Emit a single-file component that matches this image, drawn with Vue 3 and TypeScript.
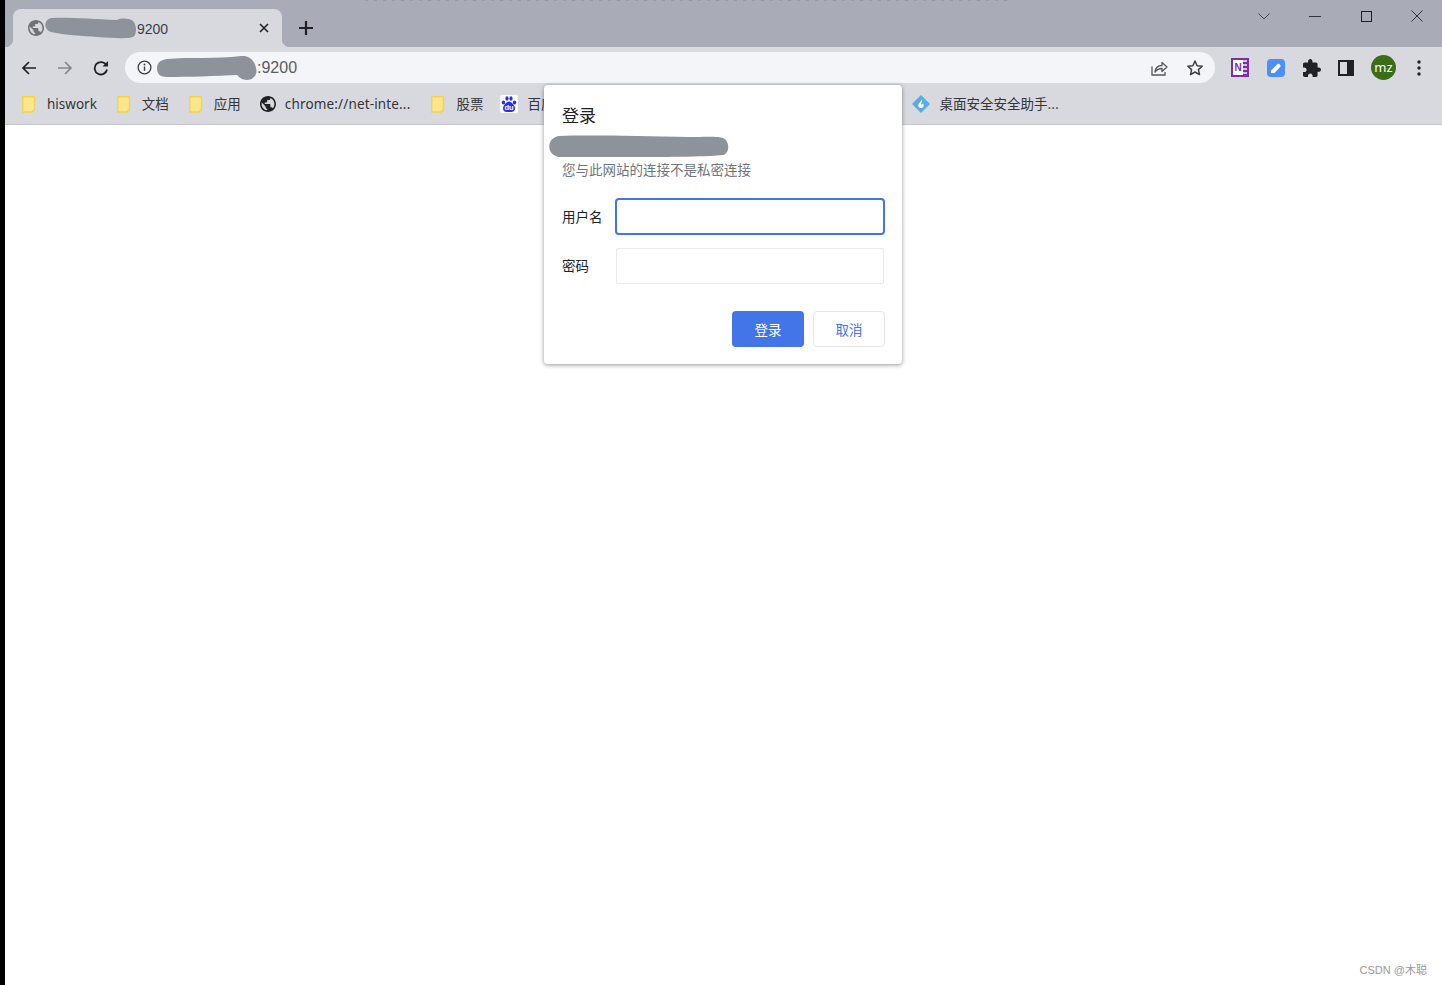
<template>
  <div class="page">
    <div class="edge"></div>
    <div class="browser">
      <div class="tabstrip">
        <div class="tab">
          <svg class="tab-globe" viewBox="2 2 20 20" width="16" height="16">
            <path fill="#6f7278" :d="globePath" />
          </svg>
          <svg class="tab-mask" viewBox="0 0 94 24" width="94" height="24">
            <path fill="#8e939b" d="M8 2C24 1 50 3 74 4c4-2 12-2 16 1 4 4 4 14 0 16-6 2-20 1-36 0-14-1-32-2-46-5C1 14 0 4 8 2z" />
          </svg>
          <span class="tab-title">9200</span>
          <svg class="tab-close" viewBox="0 0 10 10" width="10" height="10">
            <path d="M1 1l8 8M9 1L1 9" stroke="#202124" stroke-width="1.6" fill="none" />
          </svg>
        </div>
        <svg class="newtab" viewBox="0 0 14 14" width="14" height="14">
          <path d="M7 0v14M0 7h14" stroke="#202124" stroke-width="2.2" fill="none" />
        </svg>
        <div class="winctrl">
          <svg viewBox="0 0 14 14" width="14" height="14"><path d="M1.5 4.5L7 10l5.500-5.500" stroke="#4a4c52" fill="none" /></svg>
          <svg viewBox="0 0 14 14" width="14" height="14"><path d="M1 7.500h12" stroke="#33353a" fill="none" /></svg>
          <svg viewBox="0 0 14 14" width="14" height="14"><rect x="2.500" y="2.500" width="10" height="10" stroke="#1f2024" fill="none" /></svg>
          <svg viewBox="0 0 14 14" width="14" height="14"><path d="M1.500 1.500l11 11M12.500 1.500l-11 11" stroke="#33353a" fill="none" /></svg>
        </div>
      </div>

      <div class="toolbar">
        <button class="nav">
          <svg viewBox="0 0 16 16" width="16" height="16"><path d="M15 8H2M8 2L2 8l6 6" stroke="#202124" stroke-width="1.700" fill="none" /></svg>
        </button>
        <button class="nav">
          <svg viewBox="0 0 16 16" width="16" height="16"><path d="M1 8h13M8 2l6 6-6 6" stroke="#85878d" stroke-width="1.700" fill="none" /></svg>
        </button>
        <button class="nav nav-reload">
          <svg viewBox="0 0 16 16" width="16" height="16">
            <path d="M13.300 5.200A6.200 6.200 0 1 0 14 9.500" stroke="#202124" stroke-width="1.800" fill="none" />
            <path d="M15 1v5.500H9.500z" fill="#202124" />
          </svg>
        </button>
        <div class="omnibox">
          <svg class="omni-info" viewBox="0 0 16 16" width="15" height="15">
            <circle cx="8" cy="8" r="6.800" stroke="#3c3e44" stroke-width="1.400" fill="none" />
            <path d="M8 7v4.500" stroke="#3c3e44" stroke-width="1.500" />
            <circle cx="8" cy="4.800" r="1" fill="#3c3e44" />
          </svg>
          <svg class="omni-mask" viewBox="0 0 102 24" width="102" height="24">
            <path fill="#8e939b" d="M10 3C30 1 60 3 84 0c8-1 14 5 15 12 2 6-2 12-9 12-5 0-8-3-10-5-20 1-50 2-70 2C2 21 0 17 0 12S3 4 10 3z" />
          </svg>
          <span class="omni-url">:9200</span>
          <svg class="omni-share" viewBox="0 0 18 18" width="18" height="18">
            <path d="M2 7.500V16h13v-3" stroke="#55575c" stroke-width="1.300" fill="none" />
            <path d="M5 13c.5-4 3-6.500 7-6.500V3.500l5 4.500-5 4.500V9.500c-3 0-5 1-7 3.500z" stroke="#55575c" stroke-width="1.300" fill="none" stroke-linejoin="round" />
          </svg>
          <svg class="omni-star" viewBox="0 0 18 18" width="18" height="18">
            <path d="M9 2l2.100 4.700 5.100.5-3.800 3.400 1.100 5L9 13l-4.500 2.600 1.100-5L1.800 7.200l5.100-.5z" stroke="#3c3e44" stroke-width="1.500" fill="none" stroke-linejoin="round" />
          </svg>
        </div>
        <div class="extensions">
          <div class="ext-note"><span class="ext-note-n">N</span><span class="ext-note-lines"></span></div>
          <div class="ext-blue">
            <svg viewBox="0 0 18 18" width="18" height="18"><path d="M4 11.500L10.500 5c1.200-1.200 4 1.300 2.800 2.800L7.500 14H4z" fill="#fff" /></svg>
          </div>
          <svg class="ext-puzzle" viewBox="2 1 21 21" width="18" height="18"><path fill="#202124" d="M20.500 11H19V7c0-1.100-.9-2-2-2h-4V3.500C13 2.120 11.880 1 10.500 1S8 2.120 8 3.500V5H4c-1.100 0-1.990.9-1.990 2v3.800H3.500c1.490 0 2.700 1.210 2.700 2.700s-1.210 2.700-2.700 2.700H2V20c0 1.100.9 2 2 2h3.800v-1.500c0-1.490 1.210-2.700 2.700-2.700 1.490 0 2.700 1.210 2.700 2.700V22H17c1.100 0 2-.9 2-2v-4h1.500c1.380 0 2.500-1.120 2.500-2.500S21.880 11 20.500 11z" /></svg>
          <div class="ext-panel"></div>
          <div class="avatar">mz</div>
          <svg class="ext-dots" viewBox="0 0 4 16" width="4" height="16">
            <circle cx="2" cy="2" r="1.700" fill="#202124" />
            <circle cx="2" cy="8" r="1.700" fill="#202124" />
            <circle cx="2" cy="14" r="1.700" fill="#202124" />
          </svg>
        </div>
      </div>

      <div class="bookmarks">
        <div v-for="b in bookmarks" :key="b.label" class="bookmark" :style="{ marginRight: b.gap + 'px' }">
          <svg v-if="b.icon === 'folder'" class="bm-icon bm-folder" viewBox="0 0 14 17" width="14" height="17">
            <path d="M.8.8h11.700v12.500L10 16H.8z" fill="#fce68b" stroke="#f2d24e" stroke-width="1.400" />
          </svg>
          <svg v-else-if="b.icon === 'globe'" class="bm-icon" viewBox="2 2 20 20" width="16" height="16">
            <path fill="#202124" :d="globePath" />
          </svg>
          <svg v-else-if="b.icon === 'baidu'" class="bm-icon" viewBox="0 0 18 18" width="18" height="18">
            <rect width="18" height="18" rx="2" fill="#fff" />
            <ellipse cx="3.500" cy="7.500" rx="1.700" ry="2" fill="#2932e1" />
            <ellipse cx="14.500" cy="7.500" rx="1.700" ry="2" fill="#2932e1" />
            <ellipse cx="7" cy="3.500" rx="1.600" ry="2.200" fill="#2932e1" />
            <ellipse cx="11" cy="3.500" rx="1.600" ry="2.200" fill="#2932e1" />
            <path d="M9 6.500c2.500 0 6 4 6 7S12.500 17 9 17s-6-.5-6-3.500 3.500-7 6-7z" fill="#2932e1" />
            <text x="9" y="15" text-anchor="middle" font-size="7.500" font-weight="700" fill="#fff" font-family="Liberation Sans, sans-serif">du</text>
          </svg>
          <svg v-else class="bm-icon" viewBox="0 0 18 18" width="18" height="18">
            <path d="M9 0l9 9-9 9-9-9z" fill="#5aabe0" />
            <path d="M10.500 4L7 8.500c-1.500 2-.5 4.500 2 4.500s3.500-2.500 2-4.500c-.5 1-1.500 1-2 1z" fill="#fff" />
          </svg>
          <span class="bm-label" :class="{ 'bm-cjk': b.cjk, 'bm-wide': b.icon === 'globe' }">{{ b.label }}</span>
        </div>
      </div>

      <div class="content">
        <span class="watermark">CSDN @木聪</span>
      </div>
    </div>

    <div class="dialog">
      <div class="dlg-title">登录</div>
      <svg class="dlg-mask" viewBox="0 0 180 22" width="180" height="22">
        <path fill="#8e939b" d="M10 1C40 0 90 1 140 2c12 0 30-1 34 1 7 3 7 15 0 17-20 2-60 2-100 2H10C-3 20-3 3 10 1z" />
      </svg>
      <div class="dlg-sub">您与此网站的连接不是私密连接</div>
      <div class="dlg-row">
        <label class="dlg-label">用户名</label>
        <input class="dlg-input dlg-focus" type="text" />
      </div>
      <div class="dlg-row dlg-row2">
        <label class="dlg-label">密码</label>
        <input class="dlg-input dlg-plain" type="password" />
      </div>
      <div class="dlg-actions">
        <button class="btn btn-primary">登录</button>
        <button class="btn btn-cancel">取消</button>
      </div>
    </div>
  </div>
</template>

<script setup lang="ts">
interface Bookmark {
  label: string;
  icon: 'folder' | 'globe' | 'baidu' | 'diamond';
  gap: number;
  cjk?: boolean;
}

const globePath =
  'M12 2C6.48 2 2 6.48 2 12s4.48 10 10 10 10-4.48 10-10S17.52 2 12 2zm-1 17.93c-3.95-.49-7-3.85-7-7.93 0-.62.08-1.21.21-1.79L9 15v1c0 1.1.9 2 2 2v1.93zm6.9-2.54c-.26-.81-1-1.39-1.9-1.39h-1v-3c0-.55-.45-1-1-1H8v-2h2c.55 0 1-.45 1-1V7h2c1.1 0 2-.9 2-2v-.41c2.93 1.19 5 4.06 5 7.41 0 2.08-.8 3.97-2.1 5.39z';

const bookmarks: Bookmark[] = [
  { label: 'hiswork', icon: 'folder', gap: 20 },
  { label: '文档', icon: 'folder', gap: 20, cjk: true },
  { label: '应用', icon: 'folder', gap: 19, cjk: true },
  { label: 'chrome://net-inte...', icon: 'globe', gap: 21 },
  { label: '股票', icon: 'folder', gap: 17, cjk: true },
  { label: '百度一下', icon: 'baidu', gap: 331, cjk: true },
  { label: '桌面安全安全助手...', icon: 'diamond', gap: 0, cjk: true }
];
</script>

<style>
html,
body {
  margin: 0;
  background: #fff;
}
</style>

<style scoped>
.page {
  position: relative;
  display: flex;
  width: 1442px;
  height: 985px;
  overflow: hidden;
  font-family: "Noto Sans", "Liberation Sans", "Noto Sans CJK SC", sans-serif;
}

.edge {
  width: 5px;
  flex: none;
  background: #000;
}

.browser {
  flex: 1;
  display: flex;
  flex-direction: column;
  min-width: 0;
}

.tabstrip {
  height: 47px;
  flex: none;
  display: flex;
  align-items: flex-start;
  padding-left: 8px;
  background: repeating-linear-gradient(90deg, #989aa4 0 3px, transparent 3px 9px) 360px 0 / 645px 1px no-repeat, #a9abb7;
}

.tab {
  position: relative;
  width: 269px;
  height: 38px;
  margin-top: 9px;
  display: flex;
  align-items: center;
  box-sizing: border-box;
  padding: 0 13px 0 15px;
  background: #d8d9df;
  border-radius: 8px 8px 0 0;
}

.tab::before,
.tab::after {
  content: "";
  position: absolute;
  bottom: 0;
  width: 8px;
  height: 8px;
}

.tab::before {
  left: -8px;
  background: radial-gradient(circle at 0 0, transparent 8px, #d8d9df 8.500px);
}

.tab::after {
  right: -8px;
  background: radial-gradient(circle at 100% 0, transparent 8px, #d8d9df 8.500px);
}

.tab-globe {
  flex: none;
}

.tab-mask {
  flex: none;
  margin-left: -1px;
}

.tab-title {
  padding-top: 1px;
  font-family: "Liberation Sans", sans-serif;
  font-size: 14px;
  color: #3c3e44;
}

.tab-close {
  flex: none;
  margin-left: auto;
}

.newtab {
  margin: 21px 0 0 17px;
  flex: none;
}

.winctrl {
  margin-left: auto;
  margin-top: 9px;
  padding-right: 18px;
  display: flex;
  gap: 37px;
}

.toolbar {
  height: 38px;
  flex: none;
  display: flex;
  align-items: flex-start;
  box-sizing: border-box;
  padding: 5px 0 0 6px;
  background: #d8d9df;
}

.nav {
  width: 36px;
  height: 31px;
  flex: none;
  padding: 0;
  border: 0;
  background: none;
  display: flex;
  align-items: center;
  justify-content: center;
}

.nav-reload {
  margin-right: 6px;
}

.omnibox {
  width: 1090px;
  height: 31px;
  flex: none;
  display: flex;
  align-items: center;
  box-sizing: border-box;
  padding: 0 11px 0 12px;
  background: #f4f5f8;
  border-radius: 16px;
}

.omni-info {
  flex: none;
}

.omni-mask {
  flex: none;
  margin: 0 0 0 5px;
}

.omni-url {
  margin-left: -2px;
  padding-top: 1px;
  font-family: "Liberation Sans", sans-serif;
  font-size: 16px;
  color: #5a5c62;
}

.omni-share {
  margin-left: auto;
}

.omni-star {
  margin-left: 18px;
}

.extensions {
  flex: none;
  display: flex;
  align-items: center;
  height: 31px;
  margin-left: 16px;
}

.ext-note {
  width: 18px;
  height: 19px;
  display: flex;
  align-items: center;
  box-sizing: border-box;
  padding: 2px;
  background: #7a2fa3;
}

.ext-note-n {
  width: 10px;
  height: 15px;
  background: #fff;
  color: #7a2fa3;
  font-family: "Liberation Sans", sans-serif;
  font-size: 10px;
  font-weight: 700;
  line-height: 15px;
  text-align: center;
}

.ext-note-lines {
  flex: 1;
  height: 15px;
  background: repeating-linear-gradient(#d9b9ea 0 2px, #7a2fa3 2px 4px);
}

.ext-blue {
  width: 18px;
  height: 18px;
  margin-left: 18px;
  background: #4e8ef7;
  border-radius: 4px;
}

.ext-puzzle {
  margin-left: 18px;
}

.ext-panel {
  width: 16px;
  height: 16px;
  margin-left: 17px;
  box-sizing: border-box;
  border: 2px solid #202124;
  border-right-width: 7px;
  background: #d8d9df;
}

.avatar {
  width: 25px;
  height: 25px;
  margin-left: 17px;
  border-radius: 50%;
  background: #3b6d17;
  color: #fff;
  font-size: 13px;
  line-height: 24px;
  text-align: center;
}

.ext-dots {
  margin-left: 21px;
}

.bookmarks {
  height: 40px;
  flex: none;
  display: flex;
  align-items: center;
  box-sizing: border-box;
  padding: 0 0 1px 17px;
  background: #d8d9df;
  border-bottom: 1px solid #c6c7cd;
}

.bookmark {
  display: flex;
  align-items: center;
  flex: none;
}

.bm-icon {
  flex: none;
  margin-right: 9px;
}

.bm-folder {
  margin-right: 11px;
}

.bm-label {
  font-size: 13.500px;
  color: #33353a;
  white-space: nowrap;
}

.bm-wide {
  letter-spacing: 0.15px;
}

.bm-cjk {
  padding-bottom: 2px;
  font-family: "Noto Sans CJK SC", sans-serif;
  font-size: 13.500px;
}

.content {
  flex: 1;
  display: flex;
  align-items: flex-end;
  justify-content: flex-end;
  padding: 0 15px 8px 0;
  background: #fff;
}

.watermark {
  font-family: "Liberation Sans", "Noto Sans CJK SC", sans-serif;
  font-size: 11px;
  color: #9a9a9a;
}

.dialog {
  position: absolute;
  left: 544px;
  top: 85px;
  width: 358px;
  height: 279px;
  box-sizing: border-box;
  padding: 18px 17px 17px 18px;
  background: #fff;
  border-radius: 4px;
  box-shadow: 0 1px 4px rgba(60, 64, 67, 0.55);
  font-family: "Noto Sans CJK SC", sans-serif;
}

.dlg-title {
  font-size: 17px;
  line-height: 24px;
  color: #202124;
}

.dlg-mask {
  display: block;
  margin: 8px 0 0 -13px;
}

.dlg-sub {
  margin-top: 1px;
  font-size: 13.500px;
  line-height: 22px;
  color: #70757a;
}

.dlg-row {
  display: flex;
  align-items: center;
  margin-top: 18px;
}

.dlg-row2 {
  margin-top: 13px;
}

.dlg-label {
  width: 54px;
  flex: none;
  padding-bottom: 2px;
  font-size: 13.500px;
  color: #202124;
}

.dlg-input {
  box-sizing: border-box;
  background: #fff;
  outline: none;
  padding: 0 8px;
}

.dlg-focus {
  width: 270px;
  height: 37px;
  margin-left: -1px;
  border: 2px solid #4374e8;
  border-radius: 4px;
}

.dlg-plain {
  width: 268px;
  height: 36px;
  border: 1px solid #e8eaed;
  border-radius: 2px;
}

.dlg-actions {
  display: flex;
  justify-content: flex-end;
  gap: 9px;
  margin-top: 27px;
}

.btn {
  width: 72px;
  height: 36px;
  padding: 0;
  border-radius: 4px;
  font-family: "Noto Sans CJK SC", sans-serif;
  font-size: 13.500px;
}

.btn-primary {
  border: 0;
  background: #4374e8;
  color: #fff;
}

.btn-cancel {
  border: 1px solid #e3e5e8;
  background: #fff;
  color: #4374e8;
}
</style>
